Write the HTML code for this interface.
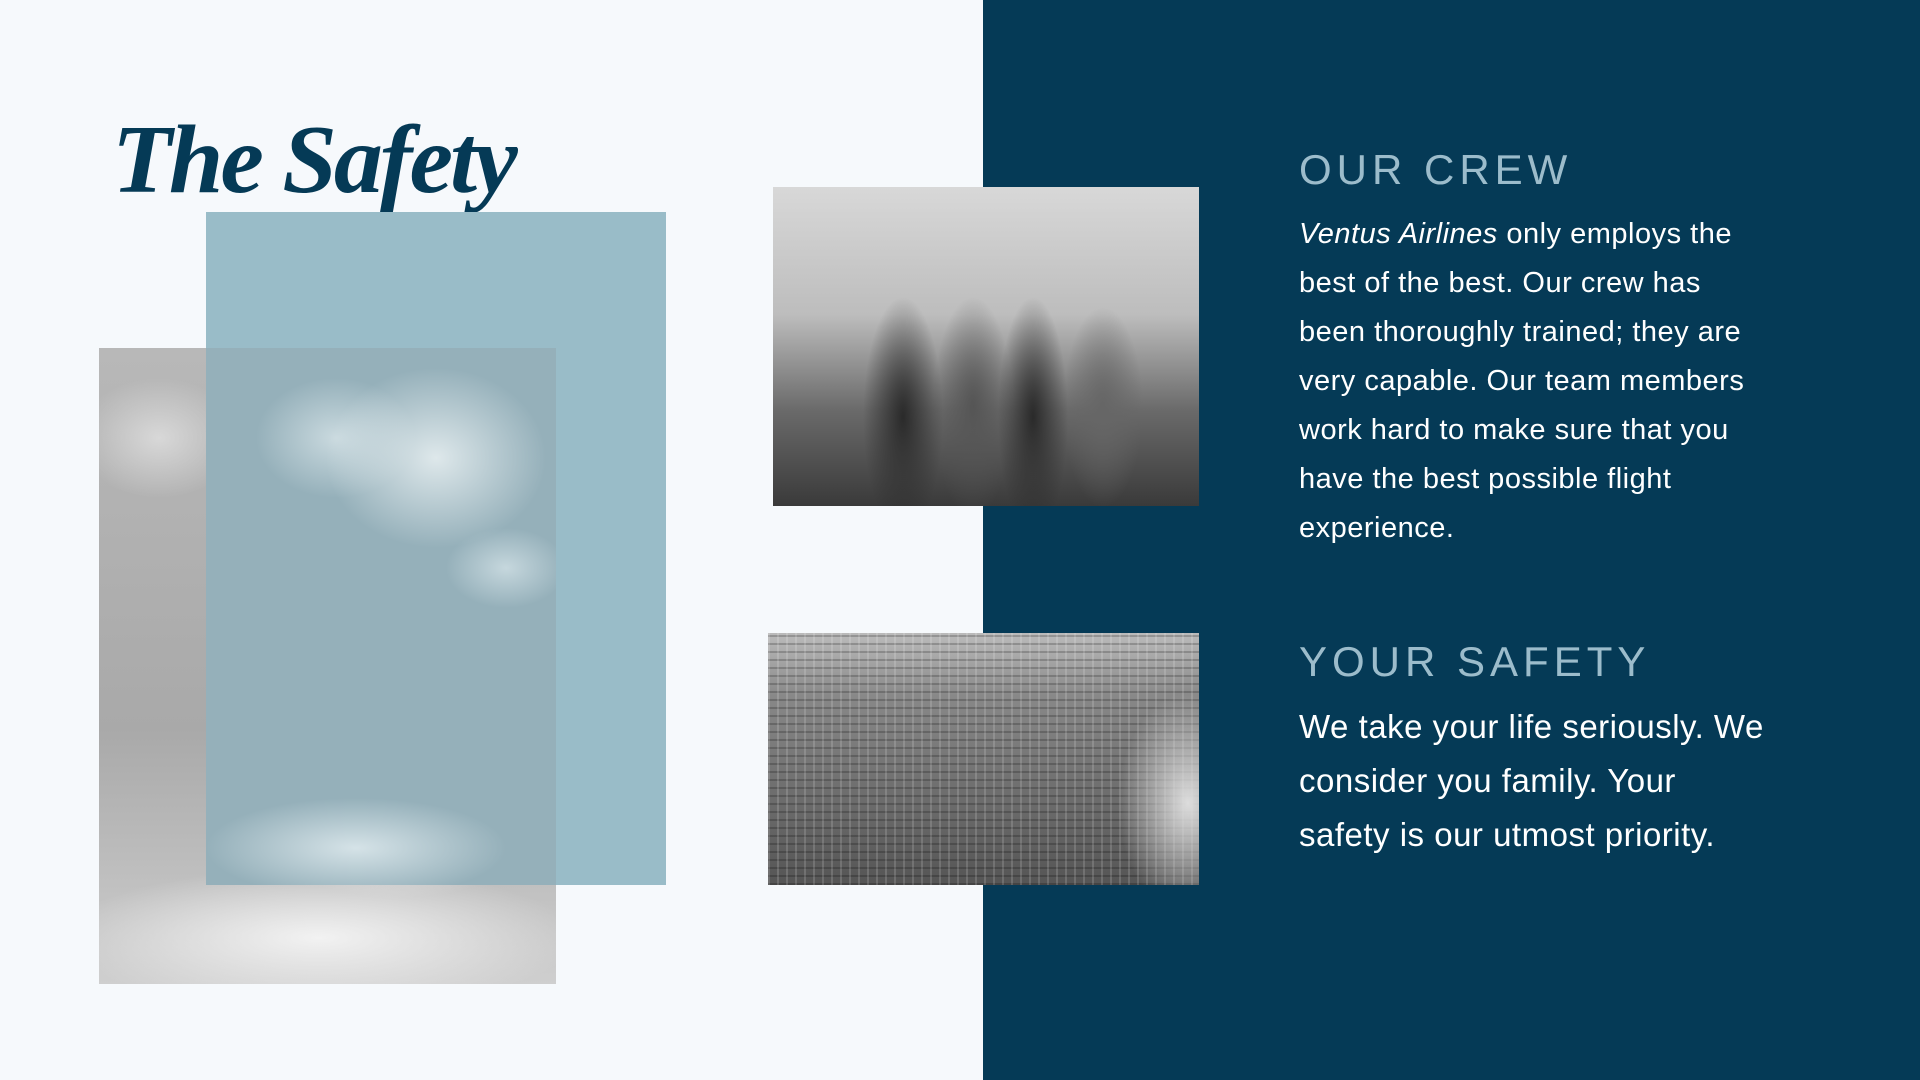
<!DOCTYPE html>
<html><head><meta charset="utf-8"><style>
*{margin:0;padding:0;box-sizing:border-box}
body{width:1920px;height:1080px;background:#f6f9fc;position:relative;overflow:hidden;font-family:"Liberation Sans",sans-serif}
.dark{position:absolute;left:983px;top:0;width:937px;height:1080px;background:#053a56}
.title{position:absolute;left:112px;top:104px;font-family:"Liberation Serif",serif;font-weight:bold;font-style:italic;font-size:98px;color:#053a56;letter-spacing:-3px}
.clouds{position:absolute;left:99px;top:348px;width:457px;height:636px;background:
radial-gradient(ellipse 120px 90px at 330px 110px,#e8e8e8,transparent),
radial-gradient(ellipse 90px 70px at 230px 80px,#dcdcdc,transparent),
radial-gradient(ellipse 80px 60px at 60px 90px,#d8d8d8,transparent),
radial-gradient(ellipse 260px 70px at 220px 590px,#f2f2f2,transparent),
radial-gradient(ellipse 120px 50px at 300px 500px,#e0e0e0,transparent),
linear-gradient(#b8b8b8,#a9a9a9 60%,#cfcfcf)}
.blue{position:absolute;left:206px;top:212px;width:460px;height:673px;background:#99bcc8}
.overlap{position:absolute;left:206px;top:348px;width:350px;height:537px;background:
radial-gradient(ellipse 110px 90px at 230px 110px,rgba(230,238,240,.9),transparent),
radial-gradient(ellipse 80px 60px at 130px 90px,rgba(215,228,232,.8),transparent),
radial-gradient(ellipse 150px 50px at 150px 500px,rgba(220,232,236,.9),transparent),
radial-gradient(ellipse 60px 40px at 300px 220px,rgba(210,225,230,.8),transparent),
#95b0ba}
.crew{position:absolute;left:773px;top:187px;width:426px;height:319px;background:
radial-gradient(ellipse 40px 120px at 130px 230px,#2a2a2a,transparent),
radial-gradient(ellipse 35px 120px at 260px 230px,#2a2a2a,transparent),
radial-gradient(ellipse 40px 110px at 200px 220px,#555,transparent),
radial-gradient(ellipse 40px 100px at 330px 220px,#666,transparent),
linear-gradient(#d8d8d8,#bdbdbd 40%,#6a6a6a 70%,#3a3a3a)}
.city{position:absolute;left:768px;top:633px;width:431px;height:252px;background:
radial-gradient(ellipse 70px 110px at 420px 170px,#ddd,transparent),
repeating-linear-gradient(90deg,rgba(255,255,255,.15) 0 2px,transparent 2px 9px),
repeating-linear-gradient(0deg,rgba(0,0,0,.2) 0 2px,transparent 2px 8px),
linear-gradient(#bbb,#888 25%,#555)}
h2{position:absolute;left:1299px;font-weight:normal;color:#9cbccb;font-size:42px;letter-spacing:5px}
p{position:absolute;left:1299px;color:#fff;white-space:nowrap}
</style></head><body>
<div class="dark"></div>
<div class="title">The Safety</div>
<div class="clouds"></div>
<div class="blue"></div>
<div class="overlap"></div>
<div class="crew"></div>
<div class="city"></div>
<h2 style="top:146px">OUR CREW</h2>
<p style="top:210px;font-size:29px;line-height:49px;letter-spacing:0.5px"><i>Ventus Airlines</i> only employs the<br>best of the best. Our crew has<br>been thoroughly trained; they are<br>very capable. Our team members<br>work hard to make sure that you<br>have the best possible flight<br>experience.</p>
<h2 style="top:638px">YOUR SAFETY</h2>
<p style="top:700px;font-size:33px;line-height:54px;letter-spacing:0.5px">We take your life seriously. We<br>consider you family. Your<br>safety is our utmost priority.</p>
</body></html>
